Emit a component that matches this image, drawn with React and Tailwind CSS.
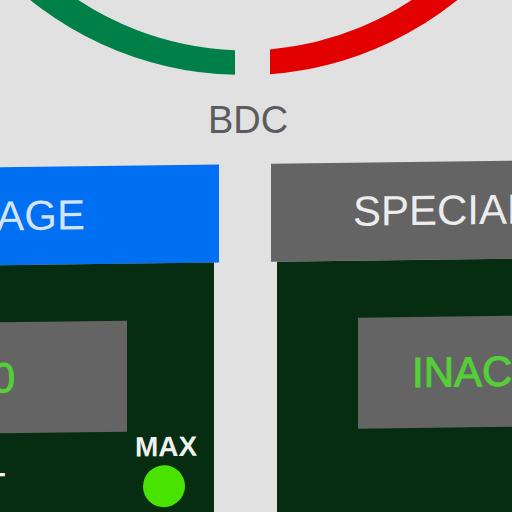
function Dial() {
  return (
    <svg viewBox="0 0 512 76" className="block w-full" role="img" aria-label="Dial">
      <path
        fill="#008048"
        d="M-10 -38 A340 340 0 0 0 235 74.8 L235 50.2 A307 307 0 0 1 50 -21 Z"
      />
      <path
        fill="#e20000"
        d="M270 74.2 A340 340 0 0 0 490 -30 L440 -21 A307 307 0 0 1 270 49.4 Z"
      />
    </svg>
  );
}

function LeftPanel() {
  return (
    <article className="flex min-w-0 flex-col">
      <h2 className="flex h-[98px] shrink-0 items-center justify-end bg-[#006ff2] pr-[134px] text-[42px] leading-[48px] text-[#d3e3fb]">
        AGE
      </h2>
      <div className="mr-[5px] flex grow flex-col bg-[#062c12] pt-[57px]">
        <output className="mr-[87px] flex h-[111px] items-center justify-end bg-[#646464] pr-[112px] text-[42px] leading-[48px] text-[#55cf38] [-webkit-text-stroke:1px_#55cf38]">
          0
        </output>
        <div className="flex justify-between pt-[2px] pr-[15px] text-[28px] leading-7 font-bold text-[#eef0ec]">
          <span className="flex w-[5px] justify-end pt-[34px]">T</span>
          <div className="flex w-16 flex-col gap-1">
            <span>MAX</span>
            <span className="ml-2 size-[42px] rounded-full bg-[#48e300]" />
          </div>
        </div>
      </div>
    </article>
  );
}

function RightPanel() {
  return (
    <article className="flex min-w-0 flex-col">
      <h2 className="flex h-[98px] shrink-0 items-center bg-[#646464] pl-[82px] text-[42px] leading-[48px] text-[#ececec]">
        SPECIAL
      </h2>
      <div className="ml-[6px] grow bg-[#062c12] pt-[57px]">
        <output className="ml-[81px] flex h-[111px] items-center bg-[#646464] pl-[54px] text-[42px] leading-[48px] text-[#55cf38] [-webkit-text-stroke:1px_#55cf38]">
          INACT
        </output>
      </div>
    </article>
  );
}

export default function App() {
  return (
    <main className="flex h-screen flex-col overflow-hidden bg-[#e1e1e1] font-['Liberation_Sans',Arial,sans-serif]">
      <Dial />
      <p className="my-6 pr-4 text-center text-[38px] leading-10 text-[#5c5c5e]">BDC</p>
      <section className="-mb-4 grid grow -skew-y-[0.75deg] grid-cols-[219fr_241fr] gap-[52px]">
        <LeftPanel />
        <RightPanel />
      </section>
    </main>
  );
}
